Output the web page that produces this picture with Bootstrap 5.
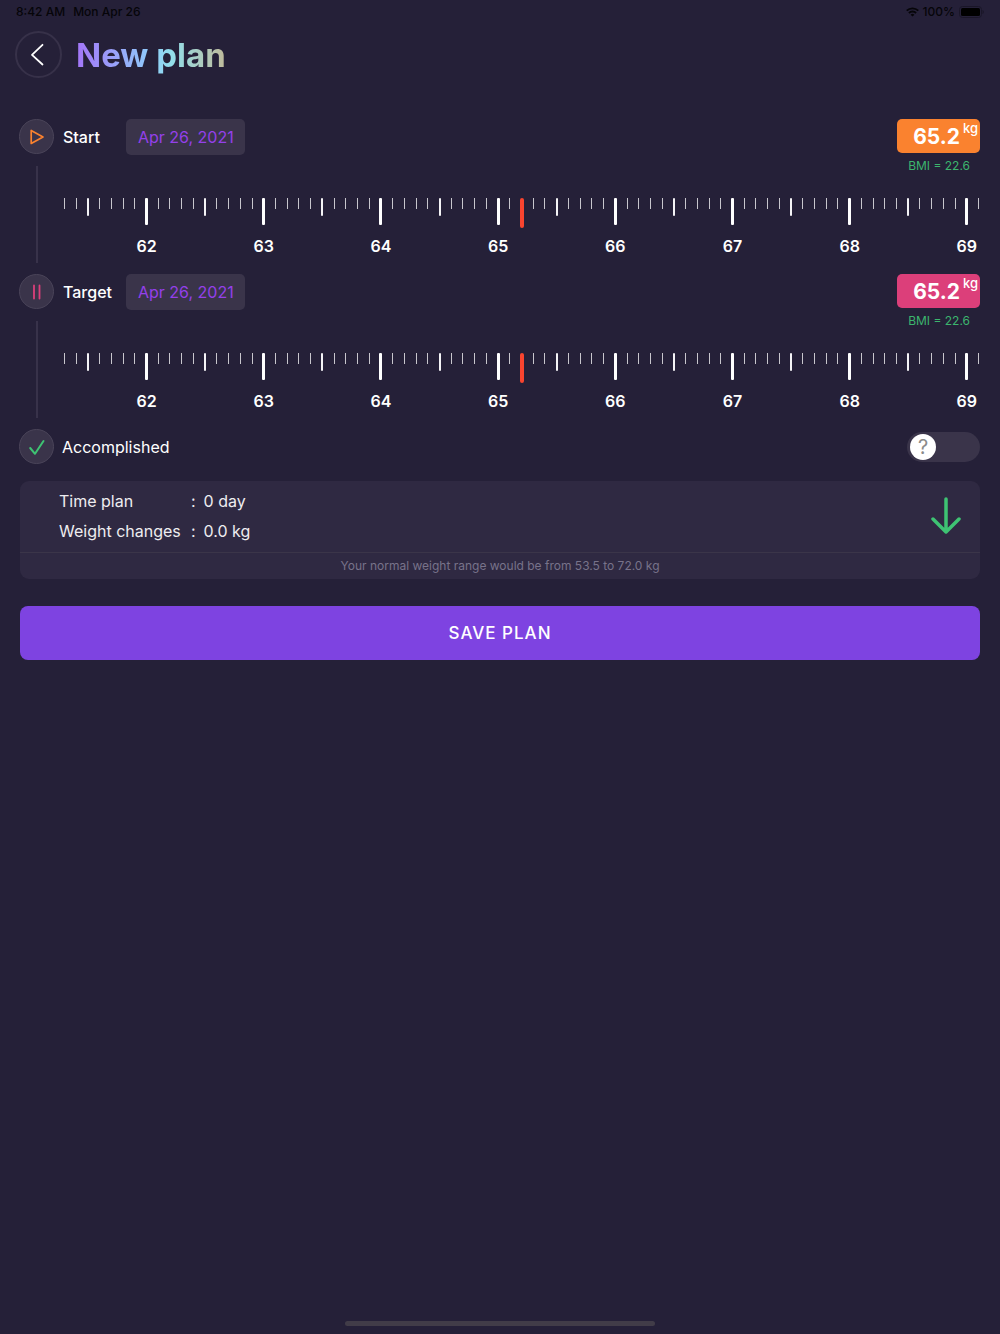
<!DOCTYPE html>
<html lang="en">
<head>
<meta charset="utf-8">
<meta name="viewport" content="width=device-width, initial-scale=1">
<title>New plan</title>
<link href="https://cdn.jsdelivr.net/npm/bootstrap@5.3.0/dist/css/bootstrap.min.css" rel="stylesheet">
<style>
  body { background: #252038; color: #fff; font-family: Inter, "Open Sans", sans-serif; font-size: 16px; line-height: 24px; }
  .status-bar { height: 24px; padding: 0 16px; font-size: 12px; line-height: 24px; color: #060509; }
  .top-bar { height: 61px; padding: 0 15px; gap: 14px; }
  .btn-back { width: 47px; height: 47px; border: 2px solid #373149; color: #fff; }
  .btn-back:hover { border-color: #5a5270; color: #fff; }
  .page-title { font-size: 33px; line-height: 40px; background: linear-gradient(90deg, #a375f8, #8fccfb 50%, #93dfea 64%, #c0ba9a); -webkit-background-clip: text; background-clip: text; color: transparent; }
  .plan { padding: 34px 20px 0 19px; }
  .stage { min-height: 155px; gap: 9px; }
  .rail { width: 35px; gap: 12px; padding-bottom: 11px; }
  .rail-dot { width: 35px; height: 35px; background: #3a344a; border: 1px solid #4a4459; }
  .rail-line { width: 2px; background: #38324a; }
  .stage-name { width: 63px; line-height: 36px; }
  .btn-date { height: 36px; padding: 0 11px 0 12px; background: #3a344a; color: #9440ea; border: 0; border-radius: 5px; font-size: 16px; line-height: 36px; }
  .btn-date:hover { background: #464056; color: #a660f0; }
  .stage-head { height: 79px; }
  .weight-tag { width: 83px; height: 34px; padding: 0 2px; gap: 3px; border-radius: 5px; font-size: 21px; line-height: 36px; }
  .weight-tag sup { top: 0; font-size: 13px; line-height: 19px; font-weight: 500; }
  .tag-start { background: #fa822f; }
  .tag-target { background: #dc3f7a; }
  .bmi { font-size: 12px; line-height: 26px; color: #3cb56e; padding-right: 10px; }
  .ruler-box { padding-left: 1px; }
  .scale-item { width: 1px; height: 60px; }
  .tick-line { flex: none; width: 1px; height: 11px; background: #c8c6cd; }
  .tick-half { width: 2px; height: 18px; background: #f4f3f6; border-radius: 1px; }
  .tick-full { width: 3px; height: 27px; background: #fff; border-radius: 1px; }
  .tick-num { margin-top: 9px; line-height: 24px; font-weight: 600; }
  .ruler-input { -webkit-appearance: none; appearance: none; height: 30px; margin: 0; background: transparent; }
  .ruler-input::-webkit-slider-thumb { -webkit-appearance: none; width: 4px; height: 30px; border-radius: 2px; background: #f9442f; }
  .ruler-input::-moz-range-thumb { width: 4px; height: 30px; border: 0; border-radius: 2px; background: #f9442f; }
  .switch-box { width: 73px; height: 30px; }
  .switch-input { -webkit-appearance: none; appearance: none; background: #3a344a; border-radius: 15px; }
  .switch-input:checked { background: #3ec373; }
  .switch-knob { top: 2px; left: 3px; width: 26px; height: 26px; border-radius: 50%; background: #fff; color: #8b8b8b; font-size: 20px; line-height: 26px; pointer-events: none; }
  .switch-input:checked + .switch-knob { left: auto; right: 3px; }
  .summary { margin: 17px 0 0 1px; background: #2f2942; border-radius: 9px; }
  .summary-main { height: 72px; padding: 4px 18px 6px 39px; border-bottom: 1px solid #3b3549; }
  .summary-row { line-height: 30px; color: #eeedf0; }
  .summary-label { width: 132px; }
  .summary-note { font-size: 12px; line-height: 26px; color: #78738a; }
  .btn-save { height: 54px; margin: 27px 0 0 1px; background: #7e43e1; color: #fff; border: 0; border-radius: 8px; font-size: 17px; line-height: 24px; letter-spacing: 1px; }
  .btn-save:hover { background: #8c55e8; color: #fff; }
  .home-bar { width: 31%; height: 5px; margin-bottom: 8px; border-radius: 3px; background: #413c48; }
</style>
</head>
<body class="min-vh-100 d-flex flex-column">
<div class="status-bar d-flex justify-content-between fw-medium">
  <div class="d-flex gap-2"><span>8:42 AM</span><span>Mon Apr 26</span></div>
  <div class="d-flex align-items-center gap-1">
    <svg width="13" height="10" viewBox="0 0 13 10" fill="none" stroke="currentColor" stroke-width="1.8" aria-label="Wi-Fi"><path d="M.7 3.7a8.2 8.2 0 0 1 11.6 0M2.9 6a5.1 5.1 0 0 1 7.2 0"/><path d="M6.5 9.6 4.6 7.7a2.7 2.7 0 0 1 3.8 0z" fill="currentColor" stroke="none"/></svg>
    <span>100%</span>
    <svg width="25" height="12" viewBox="0 0 25 12" aria-label="Battery full"><rect x=".5" y=".5" width="22" height="11" rx="3" fill="none" stroke="#1a1628"/><rect x="2" y="2" width="19" height="8" rx="1.5" fill="#000"/><path d="M23.500 4v4c1.800-.6 1.800-3.400 0-4z" fill="#1a1628"/></svg>
  </div>
</div>

<header class="top-bar d-flex align-items-center">
  <button type="button" class="btn btn-back rounded-circle p-0 d-flex align-items-center justify-content-center" aria-label="Back">
    <svg width="24" height="24" viewBox="0 0 24 24" fill="none" stroke="currentColor" stroke-width="1.8" stroke-linecap="round" stroke-linejoin="round"><path d="M15.500 1.800 5 11.800l10.500 9.700"/></svg>
  </button>
  <h1 class="page-title fw-bold m-0">New plan</h1>
</header>

<main class="plan flex-grow-1">
  <section class="stage d-flex">
    <div class="rail d-flex flex-column align-items-center">
      <div class="rail-dot rounded-circle d-flex align-items-center justify-content-center">
        <svg width="18" height="18" viewBox="0 0 18 18" fill="none" stroke="#fa822f" stroke-width="1.700" stroke-linejoin="round"><path d="M3.200 2.500v13L15 9z"/></svg>
      </div>
      <div class="rail-line flex-grow-1"></div>
    </div>
    <div class="flex-grow-1">
      <div class="stage-head d-flex justify-content-between">
        <div class="d-flex"><label class="stage-name fw-medium" for="startWeight">Start</label><div><button type="button" class="btn btn-date">Apr 26, 2021</button></div></div>
        <div class="text-end">
          <div class="weight-tag tag-start d-flex justify-content-end fw-bold">65.2<sup>kg</sup></div>
          <div class="bmi">BMI = 22.6</div>
        </div>
      </div>
      <div class="ruler-box position-relative">
        <div class="ruler-scale d-flex justify-content-between"></div>
        <input type="range" class="ruler-input position-absolute top-0 start-0 w-100" id="startWeight" min="61.3" max="69.1" step="0.1" value="65.2">
      </div>
    </div>
  </section>

  <section class="stage d-flex">
    <div class="rail d-flex flex-column align-items-center">
      <div class="rail-dot rounded-circle d-flex align-items-center justify-content-center">
        <svg width="18" height="18" viewBox="0 0 18 18" fill="none" stroke="#dc3f7a" stroke-width="1.800" stroke-linecap="round"><path d="M6 2.500v13M11.500 2.500v13"/></svg>
      </div>
      <div class="rail-line flex-grow-1"></div>
    </div>
    <div class="flex-grow-1">
      <div class="stage-head d-flex justify-content-between">
        <div class="d-flex"><label class="stage-name fw-medium" for="targetWeight">Target</label><div><button type="button" class="btn btn-date">Apr 26, 2021</button></div></div>
        <div class="text-end">
          <div class="weight-tag tag-target d-flex justify-content-end fw-bold">65.2<sup>kg</sup></div>
          <div class="bmi">BMI = 22.6</div>
        </div>
      </div>
      <div class="ruler-box position-relative">
        <div class="ruler-scale d-flex justify-content-between"></div>
        <input type="range" class="ruler-input position-absolute top-0 start-0 w-100" id="targetWeight" min="61.3" max="69.1" step="0.1" value="65.2">
      </div>
    </div>
  </section>

  <section class="d-flex align-items-center justify-content-between">
    <div class="d-flex align-items-center">
      <div class="rail-dot rounded-circle d-flex align-items-center justify-content-center me-2">
        <svg width="18" height="18" viewBox="0 0 18 18" fill="none" stroke="#3ec373" stroke-width="2" stroke-linecap="round" stroke-linejoin="round"><path d="M2.200 10 7 15.800 15.500 3"/></svg>
      </div>
      <label for="accomplished">Accomplished</label>
    </div>
    <div class="switch-box position-relative">
      <input type="checkbox" role="switch" class="switch-input w-100 h-100 m-0 d-block" id="accomplished">
      <span class="switch-knob position-absolute text-center" aria-hidden="true">?</span>
    </div>
  </section>

  <section class="summary">
    <div class="summary-main d-flex justify-content-between align-items-center">
      <dl class="m-0">
        <div class="summary-row d-flex"><dt class="summary-label fw-normal">Time plan</dt><dd class="m-0 d-flex gap-2"><span>:</span><span>0 day</span></dd></div>
        <div class="summary-row d-flex"><dt class="summary-label fw-normal">Weight changes</dt><dd class="m-0 d-flex gap-2"><span>:</span><span>0.0 kg</span></dd></div>
      </dl>
      <svg width="32" height="38" viewBox="0 0 32 38" fill="none" stroke="#3ec373" stroke-width="3.500" stroke-linecap="round" stroke-linejoin="round"><path d="M16 2v33M3 22l13 13 13-13"/></svg>
    </div>
    <div class="summary-note text-center">Your normal weight range would be from 53.5 to 72.0 kg</div>
  </section>

  <div class="d-flex"><button type="button" class="btn btn-save flex-grow-1 fw-medium">SAVE PLAN</button></div>
</main>

<div class="home-bar mx-auto"></div>

<script src="https://cdn.jsdelivr.net/npm/bootstrap@5.3.0/dist/js/bootstrap.bundle.min.js"></script>
<script>
  // One tick per 0.1 kg, from 61.3 to 69.1; whole kilograms carry a number.
  document.querySelectorAll('.ruler-scale').forEach(function (scale) {
    for (let tenths = 613; tenths <= 691; tenths++) {
      const item = document.createElement('div');
      item.className = 'scale-item d-flex flex-column align-items-center';
      const line = document.createElement('div');
      line.className = 'tick-line' + (tenths % 10 === 0 ? ' tick-full' : tenths % 5 === 0 ? ' tick-half' : '');
      if (tenths === 652) line.classList.add('invisible');
      item.append(line);
      if (tenths % 10 === 0) {
        const num = document.createElement('span');
        num.className = 'tick-num';
        num.textContent = tenths / 10;
        item.append(num);
      }
      scale.append(item);
    }
  });
</script>
</body>
</html>
